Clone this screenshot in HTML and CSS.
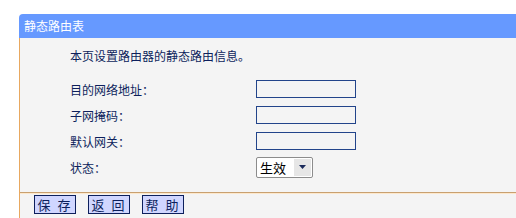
FILE: index.html
```html
<!DOCTYPE html>
<html>
<head>
<meta charset="utf-8">
<link rel="stylesheet" href="styles.css">
</head>
<body>
<div class="panel">
  <div class="title">静态路由表</div>
  <div class="content">
    <div class="desc">本页设置路由器的静态路由信息。</div>
    <div class="form">
      <div class="label">目的网络地址：</div>
      <div class="field"><input class="box" type="text"></div>
      <div class="label">子网掩码：</div>
      <div class="field"><input class="box" type="text"></div>
      <div class="label">默认网关：</div>
      <div class="field"><input class="box" type="text"></div>
      <div class="label">状态：</div>
      <div class="field">
        <span class="select"><span class="sel-text">生效</span><span class="sel-btn"><svg width="8" height="4" viewBox="0 0 8 4"><path d="M0 0H7L3.5 4Z" fill="#1a2a5a"/></svg></span></span>
      </div>
    </div>
    <div class="buttons">
      <button class="btn">保 存</button>
      <button class="btn">返 回</button>
      <button class="btn">帮 助</button>
    </div>
  </div>
</div>
</body>
</html>
```
FILE: styles.css
```css
html, body {
  margin: 0;
  padding: 0;
  background: #ffffff;
}
body {
  font-family: "Noto Sans CJK SC", "DejaVu Sans", sans-serif;
  font-size: 12px;
  color: #0d1f5c;
}
.panel {
  margin-top: 14px;
  margin-left: 19px;
}
.title {
  height: 24px;
  line-height: 24px;
  background: #6699ff;
  color: #ffffff;
  padding-left: 5px;
  border-top-left-radius: 4px;
}
.content {
  background: #f4f4f4;
  border-left: 1px solid #e8a860;
  height: 180px;
}
.desc {
  padding-top: 5px;
  height: 26px;
  line-height: 26px;
  padding-left: 50px;
}
.form {
  margin-top: 7px;
  display: grid;
  grid-template-columns: 186px 1fr;
  grid-auto-rows: 26px;
  padding-left: 50px;
}
.label, .field {
  display: flex;
  align-items: center;
}
.box {
  box-sizing: border-box;
  width: 100px;
  height: 18px;
  border: 1px solid #22448a;
  background: #f4f4f4;
  margin: 0;
  padding: 0;
}
.select {
  box-sizing: border-box;
  display: flex;
  align-items: stretch;
  width: 57px;
  height: 21px;
  border: 1px solid #8c8c8c;
  border-radius: 2px;
  background: #ffffff;
  color: #000000;
}
.sel-text {
  flex: 1;
  padding-left: 3px;
  line-height: 19px;
  font-size: 13px;
}
.sel-btn {
  width: 17px;
  display: flex;
  align-items: center;
  justify-content: center;
  background: #e6e6e6;
  margin: 1px;
}
.buttons {
  margin-top: 12px;
  border-top: 1px solid #c8a070;
  box-shadow: inset 0 1px 0 #fde8cc;
  padding-top: 2px;
  display: flex;
  gap: 12px;
  padding-left: 14px;
}
.btn {
  box-sizing: border-box;
  height: 19px;
  width: 42px;
  padding: 0;
  border: 1px solid #0d1f5c;
  background: #d0d6ff;
  color: #0d1f5c;
  font-family: "Noto Sans CJK SC", sans-serif;
  font-size: 13px;
  line-height: 17px;
  letter-spacing: 2px;
}
```
